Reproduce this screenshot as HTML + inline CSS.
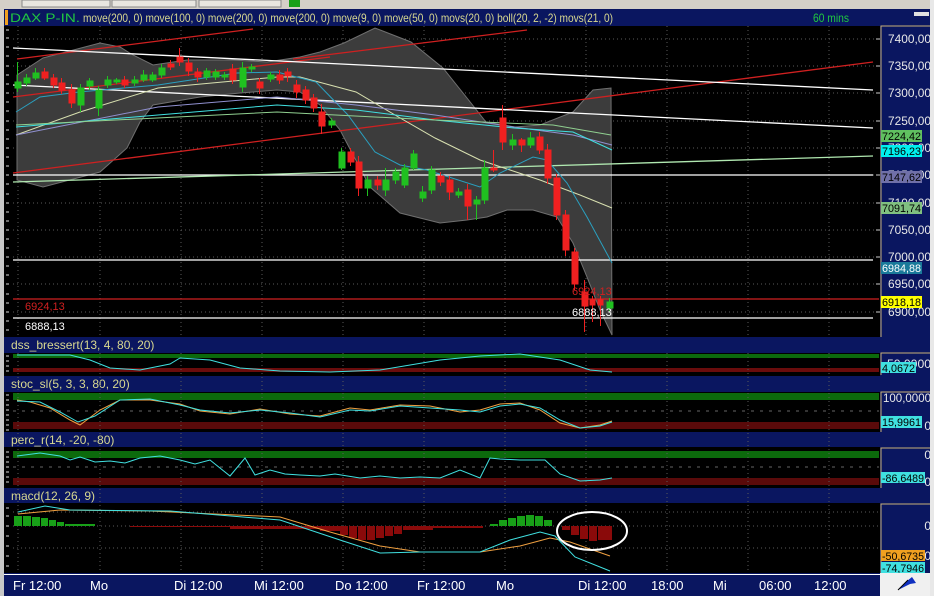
<!DOCTYPE html>
<html><head><meta charset="utf-8"><style>
html,body{margin:0;padding:0;background:#d4d0c8;}
body{width:934px;height:596px;overflow:hidden;position:relative;font-family:"Liberation Sans",sans-serif;}
svg{position:absolute;left:0;top:0;}
</style></head><body>
<svg width="934" height="596" viewBox="0 0 934 596" xmlns="http://www.w3.org/2000/svg" font-family="Liberation Sans, sans-serif">
<!-- toolbar -->
<rect x="0" y="0" width="934" height="9" fill="#d4d0c8"/>
<rect x="22" y="0" width="88" height="7" fill="#e8e6e0" stroke="#888"/>
<rect x="112" y="0" width="84" height="7" fill="#e8e6e0" stroke="#888"/>
<rect x="199" y="0" width="82" height="7" fill="#e8e6e0" stroke="#888"/>
<rect x="289" y="0" width="11" height="7" fill="#18a018"/>
<rect x="930" y="0" width="4" height="596" fill="#e8e8e8"/>
<!-- header -->
<rect x="4" y="9" width="926" height="17" fill="#0a1660"/>
<rect x="5" y="10" width="3" height="15" fill="#f0a020"/>
<text x="10" y="22" font-size="12" fill="#20c840" textLength="70" lengthAdjust="spacingAndGlyphs">DAX P-IN.</text>
<text x="83" y="22" font-size="12" fill="#d8d890" textLength="530" lengthAdjust="spacingAndGlyphs">move(200, 0) move(100, 0) move(200, 0) move(200, 0) move(9, 0) move(50, 0) movs(20, 0) boll(20, 2, -2) movs(21, 0)</text>
<text x="813" y="22" font-size="12" fill="#20c840" textLength="36" lengthAdjust="spacingAndGlyphs">60 mins</text>
<rect x="914" y="12" width="15" height="4" fill="#e0e0e0"/>
<!-- main area -->
<rect x="4" y="26" width="876" height="311" fill="#000"/>
<rect x="0" y="26" width="4" height="570" fill="#c8c8c8"/>
<rect x="4" y="337" width="876" height="238" fill="#000"/>
<!-- headers -->
<rect x="4" y="337" width="876" height="16" fill="#0a1660"/>
<rect x="4" y="376" width="876" height="16" fill="#0a1660"/>
<rect x="4" y="432" width="876" height="15" fill="#0a1660"/>
<rect x="4" y="488" width="876" height="15" fill="#0a1660"/>
<g font-size="12" fill="#d8d890">
<text x="11" y="349">dss_bressert(13, 4, 80, 20)</text>
<text x="11" y="388">stoc_sl(5, 3, 3, 80, 20)</text>
<text x="11" y="444">perc_r(14, -20, -80)</text>
<text x="11" y="500">macd(12, 26, 9)</text>
</g>
<!-- bands -->
<rect x="13" y="354" width="866" height="4" fill="#0c6a0c"/>
<rect x="13" y="368" width="866" height="4" fill="#6a0c0c"/>
<rect x="13" y="393" width="866" height="7" fill="#0c6a0c"/>
<rect x="13" y="422" width="866" height="7" fill="#5a0a0a"/>
<rect x="13" y="451" width="866" height="7" fill="#0c6a0c"/>
<rect x="13" y="478" width="866" height="7" fill="#5a0a0a"/>
<line x1="13" y1="411" x2="879" y2="411" stroke="#666" stroke-dasharray="3,6"/>
<line x1="13" y1="467" x2="879" y2="467" stroke="#666" stroke-dasharray="3,6"/>
<!-- grid -->
<g stroke="#5a5a5a" stroke-dasharray="1,3">
<path d="M18 26V337M100 26V337M181 26V337M262 26V337M343 26V337M424 26V337M505 26V337M586 26V337M667 26V337M748 26V337M829 26V337"/>
<path d="M18 353V573M100 353V573M181 353V573M262 353V573M343 353V573M424 353V573M505 353V573M586 353V573M667 353V573M748 353V573M829 353V573"/>
<path d="M13 39H879M13 66H879M13 93H879M13 121H879M13 148H879M13 175H879M13 203H879M13 230H879M13 257H879M13 284H879M13 312H879"/>
<path d="M13 526H879M13 548H879M13 512H879"/>
</g>
<!-- left ticks -->
<g stroke="#ddd"><path d="M6 30h3M6 38h3M6 47h3M6 56h3M6 66h3M6 75h3M6 84h3M6 93h3M6 102h3M6 111h3M6 121h3M6 130h3M6 139h3M6 148h3M6 157h3M6 166h3M6 175h3M6 184h3M6 194h3M6 203h3M6 212h3M6 221h3M6 230h3M6 239h3M6 248h3M6 257h3M6 266h3M6 275h3M6 284h3M6 294h3M6 303h3M6 312h3M6 321h3M6 330h3M6 356h3M6 361h3M6 366h3M6 371h3M6 395h3M6 400h3M6 405h3M6 410h3M6 415h3M6 420h3M6 425h3M6 430h3M6 452h3M6 457h3M6 462h3M6 467h3M6 472h3M6 477h3M6 482h3M6 508h3M6 516h3M6 526h3M6 536h3M6 546h3M6 556h3M6 566h3"/></g>
<!-- bollinger -->
<path d="M17 75L43 58L100 43L120 47L133 55L153 65L187 60L233 60L267 62L300 57L320 52L344 43L375 28L411 42L443 68L467 98L486 122L515 127L540 125L573 112L593 90L611 88L612 335L600 310L587 277L573 243L557 217L533 210L507 210L487 217L467 220L440 223L400 213L370 187L340 130L320 105L300 92L277 90L253 92L240 93L200 97L153 105L140 122L127 148L100 172L43 187L17 180Z" fill="#3c3c3c" stroke="#707070" stroke-width="1"/>
<!-- trend lines -->
<g fill="none" stroke-width="1.3">
<path d="M17 59L253 29" stroke="#d02020"/>
<path d="M293 59L527 30" stroke="#d02020"/>
<path d="M13 97L330 57" stroke="#d02020"/>
<path d="M13 173L873 62" stroke="#d02020"/>
<path d="M13 48L873 90" stroke="#fff"/>
<path d="M13 85L873 128" stroke="#fff"/>
<path d="M13 175H873M13 260H873M13 318H873" stroke="#fff"/>
<path d="M13 299H879" stroke="#d02020"/>
<path d="M13 182L873 156" stroke="#b0e8b0"/>
</g>
<!-- MAs -->
<g fill="none" stroke-width="1">
<path d="M16 135L80 112L158 88L277 77L300 77L356 92L395 115L435 138L480 160L540 180L580 195L612 208" stroke="#d8e0b0"/>
<path d="M16 112L40 97L79 92L158 85L237 73L277 72L316 82L348 115L375 152L400 165L427 170L480 187L500 173L533 157L547 160L567 183L587 217L612 263" stroke="#2aa0c0"/>
<path d="M16 135L158 107L277 97L356 105L435 115L514 127L573 135L612 145" stroke="#9090d0"/>
<path d="M16 127L158 115L277 105L356 110L435 120L514 128L573 132L612 150" stroke="#40e0e0"/>
<path d="M16 125L277 112L435 120L553 125L611 135" stroke="#90d090"/>
</g>
<!-- candles -->
<g stroke-width="1">
<g fill="#20c020" stroke="#20c020">
<path d="M17.5 62V92M26.5 74V86M35.5 68V80M80.5 84V112M89.5 78V90M98.5 86V116M107.5 76V88M116.5 78V84M134.5 76V86M143.5 70V82M152.5 72V82M161.5 64V78M206.5 68V80M215.5 69V80M224.5 72V80M242.5 62V92M251.5 64V72M270.5 72V82M331.5 118V128M341.5 148V170M367.5 176V196M385.5 168V196M395.5 168V184M404.5 164V188M413.5 150V170M422.5 186V202M431.5 166V194M458.5 188V198M476.5 196V220M484.5 160V204M512.5 134V150M530.5 132V148M609.5 298V312"/>
<rect x="15" y="82" width="6" height="6"/><rect x="24" y="78" width="6" height="5"/><rect x="33" y="73" width="6" height="5"/>
<rect x="78" y="88" width="6" height="17"/><rect x="87" y="81" width="6" height="5"/><rect x="96" y="90" width="6" height="18"/>
<rect x="105" y="80" width="6" height="5"/><rect x="114" y="80" width="6" height="2"/><rect x="132" y="80" width="6" height="3"/>
<rect x="141" y="75" width="6" height="5"/><rect x="150" y="75" width="6" height="5"/><rect x="159" y="68" width="6" height="7"/>
<rect x="204" y="71" width="6" height="6"/><rect x="213" y="72" width="6" height="5"/><rect x="222" y="75" width="6" height="2"/>
<rect x="240" y="68" width="6" height="19"/><rect x="249" y="67" width="6" height="2"/><rect x="268" y="75" width="6" height="4"/>
<rect x="329" y="121" width="6" height="4"/><rect x="339" y="152" width="6" height="16"/><rect x="365" y="180" width="6" height="8"/>
<rect x="383" y="180" width="6" height="10"/><rect x="393" y="172" width="6" height="8"/><rect x="402" y="168" width="6" height="17"/>
<rect x="411" y="154" width="6" height="14"/><rect x="420" y="192" width="6" height="6"/><rect x="429" y="170" width="6" height="20"/>
<rect x="456" y="192" width="6" height="3"/><rect x="474" y="200" width="6" height="4"/><rect x="482" y="168" width="6" height="32"/>
<rect x="510" y="140" width="6" height="5"/><rect x="528" y="138" width="6" height="7"/><rect x="607" y="302" width="6" height="6"/>
</g>
<g fill="#f02020" stroke="#f02020">
<path d="M44.5 68V80M53.5 74V88M61.5 78V94M71.5 84V108M124.5 76V88M170.5 60V70M179.5 48V66M188.5 58V76M197.5 68V82M232.5 64V84M259.5 78V94M279.5 70V84M287.5 68V82M296.5 80V98M305.5 86V104M313.5 94V112M321.5 104V134M350.5 148V166M358.5 156V196M377.5 176V190M440.5 172V186M449.5 176V200M467.5 184V220M493.5 150V172M502.5 105V150M521.5 138V152M539.5 132V154M547.5 144V184M556.5 174V220M565.5 210V256M574.5 248V290M584.5 280V332M592.5 296V322M600.5 296V326"/>
<rect x="42" y="72" width="6" height="6"/><rect x="51" y="78" width="6" height="7"/><rect x="59" y="83" width="6" height="7"/>
<rect x="69" y="90" width="6" height="13"/><rect x="122" y="80" width="6" height="5"/><rect x="168" y="64" width="6" height="3"/>
<rect x="177" y="57" width="6" height="5"/><rect x="186" y="63" width="6" height="8"/><rect x="195" y="72" width="6" height="5"/>
<rect x="230" y="69" width="6" height="11"/><rect x="257" y="82" width="6" height="6"/><rect x="277" y="75" width="6" height="5"/>
<rect x="285" y="72" width="6" height="4"/><rect x="294" y="85" width="6" height="7"/><rect x="303" y="90" width="6" height="10"/>
<rect x="311" y="98" width="6" height="10"/><rect x="319" y="112" width="6" height="14"/><rect x="348" y="152" width="6" height="10"/>
<rect x="356" y="162" width="6" height="26"/><rect x="375" y="180" width="6" height="5"/><rect x="438" y="176" width="6" height="6"/>
<rect x="447" y="180" width="6" height="12"/><rect x="465" y="190" width="6" height="16"/><rect x="491" y="168" width="6" height="2"/>
<rect x="500" y="118" width="6" height="24"/><rect x="519" y="140" width="6" height="5"/><rect x="537" y="137" width="6" height="13"/>
<rect x="545" y="150" width="6" height="28"/><rect x="554" y="178" width="6" height="37"/><rect x="563" y="215" width="6" height="35"/>
<rect x="572" y="252" width="6" height="32"/><rect x="582" y="292" width="6" height="14"/><rect x="590" y="300" width="5" height="5"/><rect x="598" y="300" width="5" height="5"/>
</g>
</g>
<!-- price labels in chart -->
<text x="25" y="310" font-size="11" fill="#d02020">6924,13</text>
<text x="25" y="330" font-size="11" fill="#fff">6888,13</text>
<text x="572" y="295" font-size="11" fill="#d02020">6924,13</text>
<text x="572" y="316" font-size="11" fill="#fff">6888,13</text>
<!-- dss line -->
<path d="M17 355L70 355L90 360L110 368L140 370L170 364L180 358L210 360L240 368L280 371L330 372L380 370L440 360L480 356L520 354L560 360L590 370L612 372" fill="none" stroke="#40e0e0"/>
<!-- stoc -->
<path d="M17 400L30 402L50 408L70 420L80 425L100 410L120 400L150 400L180 404L200 411L230 414L260 409L290 414L320 416L350 408L370 410L400 405L430 406L460 412L480 410L500 404L520 403L540 410L560 423L580 428L600 425L612 421" fill="none" stroke="#f0a040"/>
<path d="M17 401L40 402L60 412L78 422L95 416L120 400L150 399L180 405L200 410L230 413L260 410L290 413L320 417L350 410L370 411L400 406L430 408L460 410L480 412L500 406L520 404L540 408L560 420L580 428L600 426L612 422" fill="none" stroke="#40e0e0"/>
<!-- perc -->
<path d="M17 456L40 453L60 456L70 460L80 457L95 462L110 461L125 463L140 458L160 456L180 460L195 464L210 460L230 476L245 458L255 475L270 470L285 474L300 475L320 476L335 474L360 478L380 476L400 478L420 477L440 478L460 470L480 478L490 458L500 459L520 460L545 460L560 474L580 481L600 480L612 478" fill="none" stroke="#40e0e0"/>
<!-- macd histogram -->
<g fill="#18a018"><rect x="14" y="516" width="8" height="10"/><rect x="23" y="516" width="8" height="10"/><rect x="32" y="517" width="8" height="9"/><rect x="41" y="518" width="7" height="8"/><rect x="49" y="520" width="7" height="6"/><rect x="57" y="522" width="7" height="4"/><rect x="65" y="524" width="30" height="2"/>
<rect x="490" y="524" width="8" height="2"/><rect x="499" y="520" width="8" height="6"/><rect x="508" y="518" width="8" height="8"/><rect x="517" y="516" width="8" height="10"/><rect x="526" y="515" width="8" height="11"/><rect x="535" y="516" width="8" height="10"/><rect x="544" y="520" width="8" height="6"/></g>
<g fill="#8a0a0a"><rect x="130" y="526" width="100" height="1"/><rect x="230" y="526" width="90" height="3"/><rect x="320" y="526" width="20" height="5"/><rect x="340" y="526" width="8" height="9"/><rect x="349" y="526" width="8" height="12"/><rect x="358" y="526" width="8" height="14"/><rect x="367" y="526" width="8" height="14"/><rect x="376" y="526" width="8" height="12"/><rect x="385" y="526" width="8" height="10"/><rect x="394" y="526" width="8" height="8"/><rect x="403" y="526" width="30" height="4"/><rect x="433" y="526" width="50" height="2"/>
<rect x="562" y="526" width="8" height="4"/><rect x="571" y="526" width="8" height="9"/><rect x="580" y="526" width="8" height="13"/><rect x="589" y="526" width="8" height="15"/><rect x="598" y="526" width="8" height="14"/><rect x="606" y="526" width="6" height="14"/></g>
<path d="M18 514L60 510L150 511L280 517L330 532L380 546L420 552L480 552L520 546L550 538L570 542L610 556" fill="none" stroke="#f0a040"/>
<path d="M18 512L45 506L70 510L170 511L280 520L340 540L380 553L420 552L480 552L510 540L540 532L555 536L575 557L610 571" fill="none" stroke="#40e0e0"/>
<ellipse cx="592" cy="531" rx="35" ry="19" fill="none" stroke="#fff" stroke-width="2"/>
<!-- time axis -->
<rect x="4" y="573" width="876" height="23" fill="#0a1660"/>
<line x1="4" y1="574.5" x2="880" y2="574.5" stroke="#fff"/>
<g font-size="13" fill="#fff">
<text x="13" y="590">Fr 12:00</text><text x="90" y="590">Mo</text><text x="174" y="590">Di 12:00</text><text x="254" y="590">Mi 12:00</text><text x="335" y="590">Do 12:00</text><text x="417" y="590">Fr 12:00</text><text x="496" y="590">Mo</text><text x="578" y="590">Di 12:00</text><text x="651" y="590">18:00</text><text x="713" y="590">Mi</text><text x="759" y="590">06:00</text><text x="814" y="590">12:00</text>
</g>
<!-- right axis -->
<rect x="880" y="26" width="50" height="547" fill="#0a1660"/>
<g fill="none" stroke="#c8b078"><path d="M881 337V26H930M881 375V353H930M881 432V392H930M881 488V448H930M881 573V504H930"/></g>
<g stroke="#ccc"><path d="M876 39h4M876 66h4M876 93h4M876 121h4M876 148h4M876 175h4M876 203h4M876 230h4M876 257h4M876 284h4M876 312h4"/></g>
<g font-size="12" fill="#e8e8e8" text-anchor="end">
<text x="931" y="43" textLength="43" lengthAdjust="spacingAndGlyphs">7400,00</text><text x="931" y="70" textLength="43" lengthAdjust="spacingAndGlyphs">7350,00</text><text x="931" y="97" textLength="43" lengthAdjust="spacingAndGlyphs">7300,00</text><text x="931" y="125" textLength="43" lengthAdjust="spacingAndGlyphs">7250,00</text><text x="931" y="152" textLength="43" lengthAdjust="spacingAndGlyphs">7200,00</text><text x="931" y="179" textLength="43" lengthAdjust="spacingAndGlyphs">7150,00</text><text x="931" y="207" textLength="43" lengthAdjust="spacingAndGlyphs">7100,00</text><text x="931" y="234" textLength="43" lengthAdjust="spacingAndGlyphs">7050,00</text><text x="931" y="261" textLength="43" lengthAdjust="spacingAndGlyphs">7000,00</text><text x="931" y="288" textLength="43" lengthAdjust="spacingAndGlyphs">6950,00</text><text x="931" y="316" textLength="43" lengthAdjust="spacingAndGlyphs">6900,00</text>
<text x="931" y="368" textLength="44" lengthAdjust="spacingAndGlyphs">50,0000</text><text x="931" y="402" textLength="48" lengthAdjust="spacingAndGlyphs">100,0000</text><text x="931" y="430">0</text><text x="931" y="459">0</text><text x="931" y="486">0</text><text x="931" y="530">0</text><text x="931" y="560">0</text>
</g>
<g font-size="11">
<rect x="881" y="130" width="41" height="12" fill="#60c060"/><text x="882" y="140" fill="#000" textLength="39" lengthAdjust="spacingAndGlyphs">7224,42</text>
<rect x="881" y="145" width="41" height="12" fill="#00f0f0"/><text x="882" y="155" fill="#000" textLength="39" lengthAdjust="spacingAndGlyphs">7196,23</text>
<rect x="881" y="171" width="41" height="12" fill="#7070a8"/><text x="882" y="181" fill="#000" textLength="39" lengthAdjust="spacingAndGlyphs">7147,62</text>
<rect x="881" y="202" width="41" height="12" fill="#80c080"/><text x="882" y="212" fill="#000" textLength="39" lengthAdjust="spacingAndGlyphs">7091,74</text>
<rect x="881" y="262" width="41" height="12" fill="#1a7a9a"/><text x="882" y="272" fill="#fff" textLength="39" lengthAdjust="spacingAndGlyphs">6984,88</text>
<rect x="881" y="296" width="41" height="12" fill="#ffff00"/><text x="882" y="306" fill="#000" textLength="39" lengthAdjust="spacingAndGlyphs">6918,18</text>
<rect x="881" y="362" width="35" height="11" fill="#40e0e0"/><text x="882" y="372" fill="#000" textLength="33" lengthAdjust="spacingAndGlyphs">4,0672</text>
<rect x="881" y="416" width="41" height="12" fill="#40e0e0"/><text x="882" y="426" fill="#000" textLength="39" lengthAdjust="spacingAndGlyphs">15,9961</text>
<rect x="881" y="472" width="44" height="11" fill="#40e0e0"/><text x="882" y="482" fill="#000" textLength="42" lengthAdjust="spacingAndGlyphs">-86,6489</text>
<rect x="881" y="550" width="44" height="11" fill="#f0a020"/><text x="882" y="560" fill="#000" textLength="42" lengthAdjust="spacingAndGlyphs">-50,6735</text>
<rect x="881" y="562" width="44" height="11" fill="#40e0e0"/><text x="882" y="572" fill="#000" textLength="42" lengthAdjust="spacingAndGlyphs">-74,7946</text>
</g>
<rect x="880" y="573" width="50" height="23" fill="#f0f0f0"/>
<path d="M898 590L907 581L912 577L916 583L910 584Z" fill="#1030c0"/>
<line x1="898" y1="590" x2="908" y2="580" stroke="#000"/>
</svg>
</body></html>
